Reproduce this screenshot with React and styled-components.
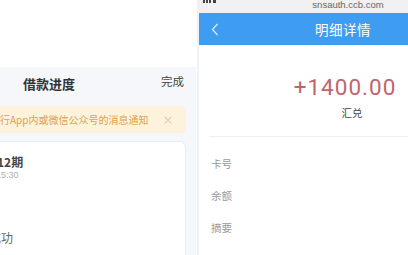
import styled, { createGlobalStyle } from 'styled-components';

const GlobalStyle = createGlobalStyle`
  html, body { margin: 0; padding: 0; background: #fff; }
  body { font-family: "Liberation Sans", "Noto Sans CJK SC", sans-serif; }
`;

const Screen = styled.div`
  display: flex;
  width: 408px;
  height: 255px;
  overflow: hidden;
  background: #fff;
`;

const LeftPane = styled.div`
  width: 197px;
  flex-shrink: 0;
  overflow: hidden;
  border-right: 2px solid #eef1f6;
`;

const LeftPage = styled.div`
  width: 294px;
  margin-left: -98px;
  display: flex;
  flex-direction: column;
  height: 255px;
`;

const TopBlank = styled.div`
  height: 67px;
  background: #fff;
`;

const Body = styled.div`
  flex: 1;
  background: #f5f7fb;
  display: flex;
  flex-direction: column;
`;

const NavRow = styled.div`
  height: 31px;
  display: flex;
  align-items: center;
  justify-content: center;
  position: relative;
  font-family: "Noto Sans CJK SC", sans-serif;
`;

const NavTitle = styled.div`
  font-size: 13px;
  font-weight: 700;
  color: #333;
  padding-top: 2px;
`;

const NavAction = styled.div`
  position: absolute;
  right: 12px;
  top: 6px;
  font-size: 11.5px;
  color: #444;
`;

const Notice = styled.div`
  margin: 8px 10px 0 12px;
  height: 27px;
  background: #fdf3dd;
  border-radius: 4px;
  display: flex;
  align-items: center;
  justify-content: space-between;
  padding: 0 12px 0 46px;
  font-family: "Noto Sans CJK SC", sans-serif;
  font-size: 10px;
  color: #e0a050;
  white-space: nowrap;
`;

const Close = styled.span`
  color: #d9c8a8;
  font-size: 12px;
`;

const Card = styled.div`
  margin: 8px 10px 0;
  flex: 1;
  background: #fff;
  border: 1px solid #e6edf8;
  border-bottom: none;
  border-radius: 6px 6px 0 0;
  padding-top: 13px;
  font-family: "Noto Sans CJK SC", sans-serif;
`;

const StepTitle = styled.div`
  padding-left: ${p => p.$indent}px;
  margin-top: ${p => p.$gap || 0}px;
  font-size: 12px;
  line-height: 14px;
  font-weight: ${p => (p.$bold ? 700 : 400)};
  color: ${p => (p.$bold ? '#444' : '#666')};
  white-space: nowrap;
`;

const StepTime = styled.div`
  padding-left: ${p => p.$indent}px;
  font-family: "Liberation Sans", sans-serif;
  font-size: 9px;
  line-height: 12px;
  color: #b0b0b0;
`;

const RightPane = styled.div`
  flex: 1;
  overflow: hidden;
`;

const RightPage = styled.div`
  width: 288px;
  display: flex;
  flex-direction: column;
`;

const StatusBar = styled.div`
  height: 13px;
  background: #f1f1f1;
  position: relative;
  display: flex;
  justify-content: center;
  align-items: flex-start;
  font-size: 9.5px;
  line-height: 10px;
  color: #666;
  padding-left: 10px;
`;

const Signal = styled.svg`
  position: absolute;
  left: 4px;
  top: -3px;
`;

const Header = styled.div`
  height: 32px;
  background: #3e9cf1;
  display: grid;
  grid-template-columns: 40px 1fr 40px;
  align-items: center;
`;

const Back = styled.div`
  padding-left: 12px;
  display: flex;
  align-items: center;
`;

const HeaderTitle = styled.div`
  text-align: center;
  color: #fff;
  font-family: "Noto Sans CJK SC", sans-serif;
  font-size: 13.5px;
  letter-spacing: 0.5px;
`;

const Summary = styled.div`
  display: flex;
  flex-direction: column;
  align-items: center;
  padding: 29px 0 16px;
  margin-left: 10px;
  border-bottom: 1px solid #eeeeee;
`;

const Amount = styled.div`
  font-family: Roboto, "Liberation Sans", sans-serif;
  font-size: 22.5px;
  line-height: 26px;
  letter-spacing: 1px;
  color: #c1646d;
  padding-right: 6px;
`;

const Kind = styled.div`
  margin-top: 6px;
  font-family: "Noto Sans CJK SC", sans-serif;
  font-size: 10.5px;
  line-height: 14px;
  color: #444;
  padding-left: 8px;
`;

const Fields = styled.div`
  padding-top: 10px;
  display: flex;
  flex-direction: column;
`;

const FieldRow = styled.div`
  height: 32px;
  display: flex;
  align-items: center;
  padding-left: 12px;
  font-family: "Noto Sans CJK SC", sans-serif;
  font-size: 10.5px;
  color: #9a9a9a;
`;

const fields = ['卡号', '余额', '摘要'];

function App() {
  return (
    <Screen>
      <GlobalStyle />
      <LeftPane>
        <LeftPage>
          <TopBlank />
          <Body>
            <NavRow>
              <NavTitle>借款进度</NavTitle>
              <NavAction>完成</NavAction>
            </NavRow>
            <Notice>
              <span>请关注建行App内或微信公众号的消息通知</span>
              <Close>×</Close>
            </Notice>
            <Card>
              <StepTitle $indent={72} $bold>第12期</StepTitle>
              <StepTime $indent={83}>15:30</StepTime>
              <StepTitle $indent={52} $gap={50}>放款成功</StepTitle>
            </Card>
          </Body>
        </LeftPage>
      </LeftPane>
      <RightPane>
        <RightPage>
          <StatusBar>
            <Signal width="14" height="6" viewBox="0 0 14 6">
              <rect x="0" y="2" width="2" height="4" fill="#444" />
              <rect x="3" y="1" width="2" height="5" fill="#444" />
              <rect x="6" y="0" width="2" height="6" fill="#444" />
              <rect x="10" y="0" width="3" height="6" fill="#444" />
            </Signal>
            snsauth.ccb.com
          </StatusBar>
          <Header>
            <Back>
              <svg width="8" height="13" viewBox="0 0 8 13">
                <path d="M6.5 1 L1.5 6.5 L6.5 12" fill="none" stroke="#d8ecff" strokeWidth="1.3" />
              </svg>
            </Back>
            <HeaderTitle>明细详情</HeaderTitle>
            <span />
          </Header>
          <Summary>
            <Amount>+1400.00</Amount>
            <Kind>汇兑</Kind>
          </Summary>
          <Fields>
            {fields.map(f => (
              <FieldRow key={f}>{f}</FieldRow>
            ))}
          </Fields>
        </RightPage>
      </RightPane>
    </Screen>
  );
}

export default App;
